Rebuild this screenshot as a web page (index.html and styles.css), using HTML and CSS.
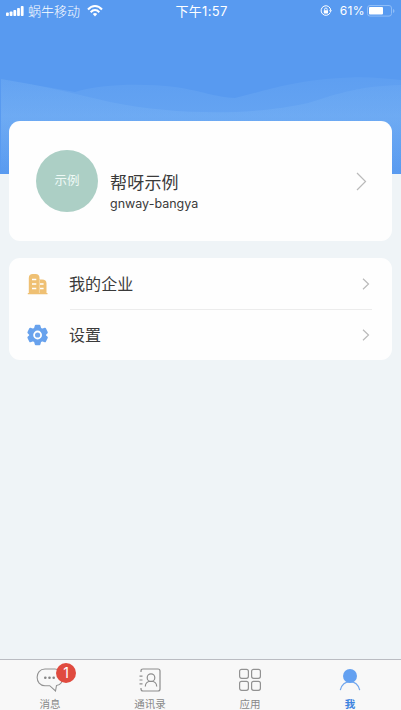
FILE: index.html
```
<!DOCTYPE html>
<html lang="zh-CN">
<head>
<meta charset="utf-8">
<meta name="viewport" content="width=device-width, initial-scale=1">
<title>我</title>
<link rel="stylesheet" href="styles.css">
</head>
<body>
<div class="app">
  <header class="hero">
    <svg class="waves" viewBox="0 0 401 100" preserveAspectRatio="none" aria-hidden="true">
      <defs>
        <linearGradient id="fade" x1="0" y1="0" x2="0" y2="1">
          <stop offset="0" stop-color="#86bdf7" stop-opacity=".14"/>
          <stop offset=".4" stop-color="#86bdf7" stop-opacity=".27"/>
          <stop offset="1" stop-color="#86bdf7" stop-opacity="0"/>
        </linearGradient>
      </defs>
      <path fill="url(#fade)" d="M1 5C25 9 50 14 75 18C100 10 142 9 175 13C202 17 215 23 235 24C265 17 290 7 340 4C365 2 382 4 401 6V100H1Z"/>
      <path fill="url(#fade)" d="M1 5C45 12 80 21 110 28C185 43 260 40 308 29C340 19 360 12 401 11V100H1Z"/>
    </svg>
    <div class="status">
      <div class="carrier">
        <svg width="18" height="10" viewBox="0 0 18 10" fill="#fff"><rect y="6.5" width="2.8" height="3.5" rx=".8"/><rect x="3.7" y="5.5" width="2.8" height="4.5" rx=".8"/><rect x="7.4" y="4" width="2.8" height="6" rx=".8"/><rect x="11.1" y="2" width="2.8" height="8" rx=".8"/><rect x="14.8" width="2.8" height="10" rx=".8"/></svg>
        <span>蜗牛移动</span>
        <svg class="wifi" width="16" height="12" viewBox="0 0 16 12" fill="none" stroke="#fff" stroke-width="2"><path d="M1 4.5C5-.1 11-.1 15 4.5M3.7 7.2c2.6-2.8 6-2.8 8.6 0"/><path d="M5.8 9c1.4-1.3 3-1.3 4.4 0L8 11.4Z" fill="#fff" stroke="none"/></svg>
      </div>
      <div class="time">下午1:57</div>
      <div class="power">
        <svg width="12" height="12" viewBox="0 0 12 12" fill="none" stroke="#fff"><path d="M10.3 7.5A4.8 4.8 0 1 1 10.7 5.2"/><path d="M9 5.2h3l-1.5 2Z" fill="#fff" stroke="none"/><rect x="3.8" y="5.2" width="4.2" height="3.3" rx=".4" fill="#fff" stroke="none"/><path d="M4.6 5.4V4.3a1.3 1.3 0 0 1 2.6 0v1.1" stroke-width=".9"/></svg>
        <span>61%</span>
        <svg class="battery" width="28" height="12" viewBox="0 0 28 12"><rect x=".5" y=".5" width="24" height="10.6" rx="2.5" fill="none" stroke="#8fbdf7"/><rect x="2" y="2" width="14" height="7.6" rx="1" fill="#fff"/><path d="M26 4v4q1.5-.6 1.5-2T26 4" fill="#8fbdf7"/></svg>
      </div>
    </div>
  </header>
  <main class="content">
    <section class="card profile">
      <div class="avatar">示例</div>
      <div class="identity">
        <div class="name">帮呀示例</div>
        <div class="account">gnway-bangya</div>
      </div>
      <svg class="arrow" width="11" height="19" viewBox="0 0 11 19"><path d="M1 1l8.5 8.5L1 18"/></svg>
    </section>
    <section class="card menu">
      <div class="row">
        <svg class="icon" width="22" height="22" viewBox="0 0 22 22"><path fill="#efc073" d="M.8 20h1V5q0-4 4-4h2.7q4 0 4 4v1.5H15q4.5 0 4.5 4V20h1v1.2H.8Z"/><path stroke="#fff" stroke-width="1.4" d="M5 6.5h4.3M5 11h4.3M5 15.5h4.3M13 11h3.6M13 15.5h3.6"/><path stroke="#f8e2bd" stroke-width=".7" d="M12.4 7v13"/></svg>
        <span class="label">我的企业</span>
        <svg class="arrow" width="8" height="12" viewBox="0 0 8 12"><path d="M1 .8L6.5 6 1 11.2"/></svg>
      </div>
      <div class="row">
        <svg class="icon" width="22" height="22" viewBox="0 0 22 22"><path fill="#68a2ed" stroke="#68a2ed" stroke-width="2" stroke-linejoin="round" d="M8.8 1.8h3.6l.8 2.8 1.9 1 2.9-.9 1.8 3.8-1.7 1.8v1.4l1.7 1.800-1.800 3.800-2.900-.9-1.900 1-.8 2.800H8.800L8 17.400l-1.900-1-2.900.9-1.800-3.800 1.700-1.800v-1.400L1.400 8.500l1.800-3.800 2.900.9 1.900-1Z"/><circle cx="10.6" cy="11" r="3.5" fill="#70a6ed" stroke="#fff" stroke-width="1.8"/></svg>
        <span class="label">设置</span>
        <svg class="arrow" width="8" height="12" viewBox="0 0 8 12"><path d="M1 .8L6.5 6 1 11.2"/></svg>
      </div>
    </section>
  </main>
  <nav class="tabs">
    <div class="tab">
      <div class="glyph">
        <svg width="28" height="24" viewBox="0 0 28 24" fill="none" stroke="#929292" stroke-width="1.1"><path d="M9 1h10c10 0 10 16 1.5 16.5L19.5 23l-5.8-5.3H9C-1.5 17.7-1.5 1 9 1Z"/><g fill="#858585" stroke="none"><circle cx="9.3" cy="9.8" r="1.3"/><circle cx="13.5" cy="9.8" r="1.3"/><circle cx="17.7" cy="9.8" r="1.3"/></g></svg>
        <span class="badge">1</span>
      </div>
      <span>消息</span>
    </div>
    <div class="tab">
      <div class="glyph"><svg width="24" height="24" viewBox="0 0 24 24" fill="none" stroke="#8d8d8d" stroke-width="1.2"><path d="M3 4V3q0-2 2-2h15q2 0 2 2v18q0 2-2 2H5q-2 0-2-2v-1M1.5 8.2h3M1.5 12h3M1.5 15.8h3"/><circle cx="13" cy="9.7" r="3.8"/><path d="M7.3 18.5c0-7 11.4-7 11.4 0"/></svg></div>
      <span>通讯录</span>
    </div>
    <div class="tab">
      <div class="glyph"><svg width="24" height="24" viewBox="0 0 24 24" fill="none" stroke="#929292" stroke-width="1.2"><rect x="1.6" y="1.3" width="8.8" height="9" rx="2"/><rect x="13.6" y="1.3" width="8.8" height="9" rx="2"/><rect x="1.6" y="13.3" width="8.8" height="9" rx="2"/><rect x="13.6" y="13.3" width="8.8" height="9" rx="2"/></svg></div>
      <span>应用</span>
    </div>
    <div class="tab active">
      <div class="glyph"><svg width="22" height="24" viewBox="0 0 22 24"><path d="M1.3 22.2C3.3 10.7 18.7 10.7 20.7 22.2" fill="none" stroke="#70a6ed" stroke-width="1.2"/><circle cx="11" cy="8" r="7" fill="#64a1f1"/></svg></div>
      <span>我</span>
    </div>
  </nav>
</div>
</body>
</html>
```
FILE: styles.css
```
* { box-sizing: border-box; }
body {
  margin: 0;
  font-family: "Noto Sans", "Noto Sans CJK SC", sans-serif;
  color: #3a3a3a;
  background: #eff4f7;
}
svg { display: block; flex: none; }
.app { height: 710px; display: flex; flex-direction: column; overflow: hidden; }
.hero { position: relative; height: 174px; flex: none; background: #589af0; }
.waves { position: absolute; left: 0; top: 74px; width: 100%; height: 100px; }
.status {
  display: grid;
  grid-template-columns: 1fr auto 1fr;
  align-items: center;
  height: 22px;
  padding: 0 6px;
  color: #fff;
  font: 12px/20px Inter, "Noto Sans CJK SC", sans-serif;
}
.carrier, .power { display: flex; align-items: center; }
.carrier { gap: 4px; font-size: 13px; }
.carrier span { font-weight: 300; }
.wifi { margin-left: 3px; }
.time { font-size: 13px; letter-spacing: .3px; padding-left: 2px; }
.power { justify-content: flex-end; font-size: 12px; }
.power svg:first-child { margin-right: 0; }
.power span { margin-left: 8px; letter-spacing: .4px; }
.battery { margin-left: 2px; }
.content {
  position: relative;
  flex: 1;
  display: flex;
  flex-direction: column;
  gap: 17px;
  margin-top: -53px;
  padding: 0 9px;
}
.card { background: #fefefe; border-radius: 11px; }
.profile { display: flex; align-items: center; height: 120px; padding: 0 25px 0 27px; }
.avatar {
  width: 62px;
  height: 62px;
  border-radius: 50%;
  background: #accfc5;
  color: #eef9f5;
  font-size: 12.5px;
  line-height: 62px;
  text-align: center;
}
.identity { flex: 1; margin: 21px 0 0 12px; }
.name { font-size: 17px; line-height: 24px; letter-spacing: .2px; }
.account { font: 12.5px/18px Inter, sans-serif; }
.arrow { fill: none; stroke: #bababa; stroke-width: 1.2; }
.menu { height: 102px; padding: 0 20px 0 18px; }
.row { display: flex; align-items: center; height: 51px; padding-right: 2px; }
.row + .row {
  background: linear-gradient(#ececec, #ececec) 43px 0 / 100% 1px no-repeat;
}
.icon { margin-right: 20px; }
.label { flex: 1; font-size: 16px; line-height: 24px; letter-spacing: .1px; }
.tabs {
  position: relative;
  display: flex;
  height: 51px;
  flex: none;
  padding-right: 1px;
  background: #f8f8f8;
  border-top: 1px solid #babcc2;
}
.tab {
  flex: 1;
  display: flex;
  flex-direction: column;
  align-items: center;
  padding-top: 8px;
  font-size: 10.5px;
  line-height: 12px;
  color: #888;
}
.glyph { position: relative; height: 30px; flex: none; }
.badge {
  position: absolute;
  left: 20px;
  top: -5px;
  width: 20px;
  height: 20px;
  border-radius: 50%;
  background: #e04b3f;
  color: #fff;
  font: 14px/20px Inter, sans-serif;
  text-align: center;
}
.active { color: #3d83df; font-weight: 700; }
```
